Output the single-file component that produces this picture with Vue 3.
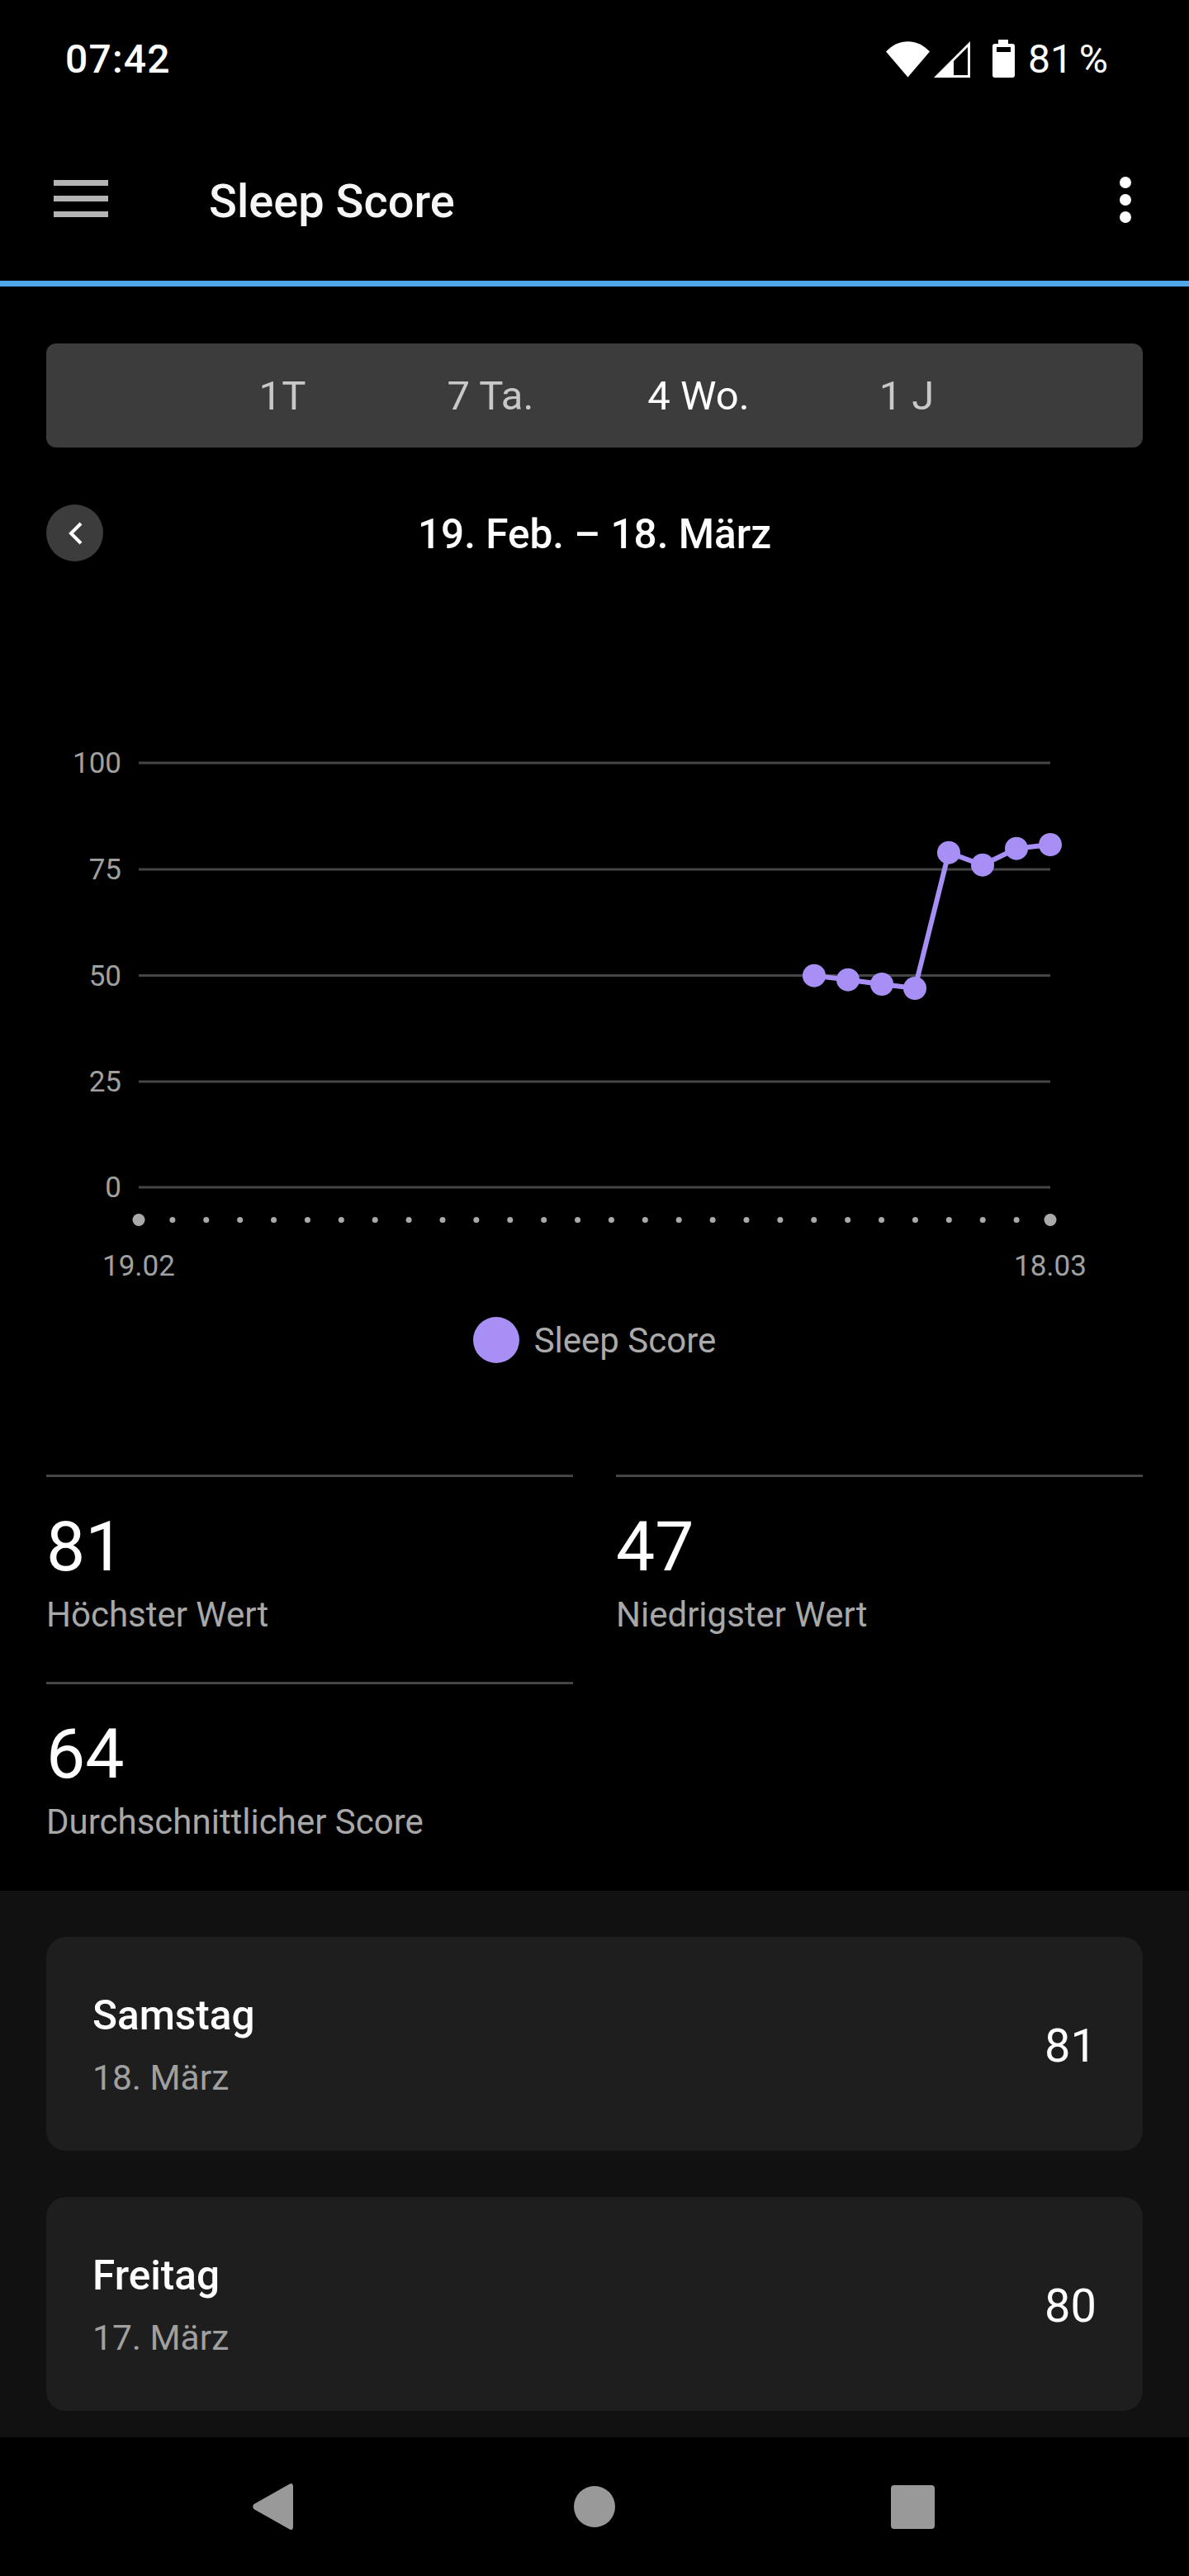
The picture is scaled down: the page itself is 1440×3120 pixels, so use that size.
<script setup>
const tabs = [
  { label: '1T', active: false },
  { label: '7 Ta.', active: false },
  { label: '4 Wo.', active: true },
  { label: '1 J', active: false },
]
const grid = [
  { label: '100', y: 924 },
  { label: '75', y: 1053 },
  { label: '50', y: 1181.5 },
  { label: '25', y: 1310 },
  { label: '0', y: 1438 },
].map((g) => ({ ...g, y: g.y - 800 }))
const ticks = Array.from({ length: 28 }, (_, i) => ({
  x: 168 + (i * 1104) / 27,
  r: i === 0 || i === 27 ? 7.5 : 3.5,
}))
const raw = [[986, 1181.7], [1027, 1186.7], [1068, 1192], [1108, 1197], [1149, 1032.7], [1190, 1047.7], [1231, 1027.7], [1272, 1023]]
const pts = raw.map(([x, y]) => ({ x, y: y - 800 }))
const line = pts.map((p) => `${p.x},${p.y}`).join(' ')
const stats = [
  { v: '81', l: 'Höchster Wert' },
  { v: '47', l: 'Niedrigster Wert' },
  { v: '64', l: 'Durchschnittlicher Score' },
]
const days = [
  { d: 'Samstag', s: '18. März', v: '81' },
  { d: 'Freitag', s: '17. März', v: '80' },
]
</script>

<template>
  <div class="phone">
    <div class="status">
      <span class="time">07:42</span>
      <div class="status-right">
        <svg class="wifi" width="53" height="44" viewBox="0 0 53 44">
          <path d="M0 12.500 C15 -4 38 -4 53 12.500 L26.500 43.500 Z" fill="#fff" />
        </svg>
        <svg class="signal" width="44" height="44" viewBox="0 0 44 44">
          <path fill-rule="evenodd" d="M0 44 L44 0 V44 Z M24 24 V41 H41 V7 Z" fill="#fff" />
        </svg>
        <svg class="battery" width="27" height="46" viewBox="0 0 27 46">
          <path fill-rule="evenodd" d="M7 0 H19 V5 H24 Q27 5 27 8 V43 Q27 46 24 46 H3 Q0 46 0 43 V8 Q0 5 3 5 H7 Z M5 9 V15 H22 V9 Z" fill="#fff" />
        </svg>
        <span class="pct">81 %</span>
      </div>
    </div>

    <header class="appbar">
      <div class="menu"><i></i><i></i><i></i></div>
      <h1>Sleep Score</h1>
      <div class="more"><i></i><i></i><i></i></div>
    </header>

    <main class="content">
      <div class="tabs">
        <span v-for="t in tabs" :key="t.label" class="tab" :class="{ active: t.active }">{{ t.label }}</span>
      </div>

      <div class="range">
        <button class="back" aria-label="Zurück">
          <svg width="20" height="28" viewBox="0 0 20 28">
            <path d="M17 2 L5 14 L17 26" fill="none" stroke="#fff" stroke-width="4" />
          </svg>
        </button>
        <span class="range-label">19. Feb. – 18. März</span>
      </div>

      <svg class="chart" width="1440" height="790" viewBox="0 0 1440 790">
        <g v-for="g in grid" :key="g.label">
          <line x1="168" x2="1272" :y1="g.y" :y2="g.y" stroke="#454545" stroke-width="3" />
          <text x="147" :y="g.y + 12" text-anchor="end" class="axis">{{ g.label }}</text>
        </g>
        <circle v-for="(t, i) in ticks" :key="i" :cx="t.x" cy="677.500" :r="t.r" fill="#aaaaaa" />
        <text x="168" y="745" text-anchor="middle" class="axis">19.02</text>
        <text x="1272" y="745" text-anchor="middle" class="axis">18.03</text>
        <polyline :points="line" fill="none" stroke="#a78ff5" stroke-width="6" />
        <circle v-for="(p, i) in pts" :key="'p' + i" :cx="p.x" :cy="p.y" r="14" fill="#a78ff5" />
      </svg>

      <div class="legend">
        <span class="legend-dot"></span>
        <span>Sleep Score</span>
      </div>

      <div class="stats">
        <div v-for="s in stats" :key="s.l" class="stat">
          <div class="stat-v">{{ s.v }}</div>
          <div class="stat-l">{{ s.l }}</div>
        </div>
      </div>

      <section class="days">
        <article v-for="d in days" :key="d.d" class="card">
          <div class="card-text">
            <div class="card-d">{{ d.d }}</div>
            <div class="card-s">{{ d.s }}</div>
          </div>
          <div class="card-v">{{ d.v }}</div>
        </article>
      </section>
    </main>

    <nav class="nav">
      <svg width="50" height="56" viewBox="0 0 50 56">
        <path d="M1.500 25 L44 1 Q49 -2 49 4 V52 Q49 58 44 55 L1.500 31 Q-1 28 1.500 25 Z" fill="#999" />
      </svg>
      <span class="home"></span>
      <span class="recent"></span>
    </nav>
  </div>
</template>

<style>
html, body { margin: 0; background: #000; }
</style>

<style scoped>
.phone {
  width: 1440px;
  height: 3120px;
  background: #000;
  color: #fff;
  font-family: Roboto, "Noto Sans", sans-serif;
  display: flex;
  flex-direction: column;
  overflow: hidden;
}
.status {
  height: 144px;
  box-sizing: border-box;
  padding: 45px 98px 0 79px;
  display: flex;
  justify-content: space-between;
  align-items: flex-start;
}
.time, .pct {
  font-size: 48px;
  line-height: 54px;
}
.time { font-weight: 500; letter-spacing: 1.200px; }
.pct { font-weight: 400; margin-left: 16px; word-spacing: -4px; }
.status-right { display: flex; align-items: center; margin-top: 0; }
.signal { margin-left: 5px; }
.battery { margin-left: 27px; margin-top: -2px; }

.appbar {
  height: 203px;
  box-sizing: border-box;
  border-bottom: 7px solid #4fa6e9;
  padding: 0 70px 0 65px;
  display: flex;
  align-items: flex-start;
  position: relative;
}
.menu {
  width: 66px;
  margin-top: 74px;
  display: flex;
  flex-direction: column;
  gap: 12px;
}
.menu i { display: block; height: 7px; background: #b4b4b4; }
h1 {
  margin: 67px 0 0 122px;
  font-size: 56px;
  line-height: 66px;
  font-weight: 500;
  flex: 1;
  color: #f6f6f6;
}
.more {
  margin-top: 70px;
  display: flex;
  flex-direction: column;
  gap: 7px;
  width: 14px;
}
.more i { display: block; width: 14px; height: 14px; border-radius: 50%; background: #fff; }

.content { flex: 1; display: flex; flex-direction: column; }
.tabs {
  margin: 69px 56px 0;
  height: 126px;
  border-radius: 12px;
  background: #3c3c3c;
  display: flex;
  padding-left: 160px;
}
.tab {
  width: 252px;
  text-align: center;
  line-height: 128px;
  font-size: 49px;
  color: #c8c8c8;
}
.tab.active { color: #fff; }

.range {
  position: relative;
  height: 69px;
  margin: 69px 56px 0;
  display: flex;
  align-items: center;
  justify-content: center;
}
.back {
  position: absolute;
  left: 0;
  top: 0;
  width: 69px;
  height: 69px;
  border: 0;
  padding: 0;
  border-radius: 50%;
  background: #3c3c3c;
  display: flex;
  align-items: center;
  justify-content: center;
}
.range-label { font-size: 49.500px; font-weight: 500; padding-top: 2px; }

.chart { display: block; margin-top: 120px; flex: none; }
.chart text.axis { font-size: 35px; fill: #a0a0a0; font-family: Roboto, sans-serif; }

.legend {
  display: flex;
  align-items: center;
  justify-content: center;
  gap: 18px;
  color: #aaa;
  font-size: 42px;
  height: 56px;
  margin-top: 5px;
}
.legend-dot { width: 56px; height: 56px; border-radius: 50%; background: #a78ff5; }

.stats {
  margin: 135px 56px 0;
  display: grid;
  grid-template-columns: 638px 638px;
  column-gap: 52px;
  row-gap: 40px;
  padding-bottom: 42px;
}
.stat { border-top: 3px solid #454545; height: 211px; box-sizing: border-box; }
.stat-v { font-size: 84px; line-height: 98px; margin-top: 36px; }
.stat-l { font-size: 42px; line-height: 50px; color: #a8a8a8; margin-top: 8px; }

.days {
  background: #111;
  padding: 56px 56px 0;
  flex: 1;
  display: flex;
  flex-direction: column;
  gap: 56px;
}
.card {
  height: 259px;
  flex: none;
  box-sizing: border-box;
  border-radius: 24px;
  background: #1e1e1e;
  padding: 0 56px;
  display: flex;
  justify-content: space-between;
  align-items: center;
}
.card-text { padding-top: 2px; }
.card-d { font-size: 49.500px; font-weight: 500; line-height: 58px; }
.card-s { font-size: 42.500px; line-height: 50px; color: #a0a0a0; margin-top: 22px; }
.card-v { font-size: 56px; padding-top: 4px; }

.nav {
  height: 168px;
  flex: none;
  background: #000;
  display: flex;
  align-items: center;
  padding-left: 306px;
}
.home { width: 50px; height: 50px; border-radius: 50%; background: #999; margin-left: 339px; }
.recent { width: 53px; height: 53px; border-radius: 4px; background: #999; margin-left: 334px; }
</style>
